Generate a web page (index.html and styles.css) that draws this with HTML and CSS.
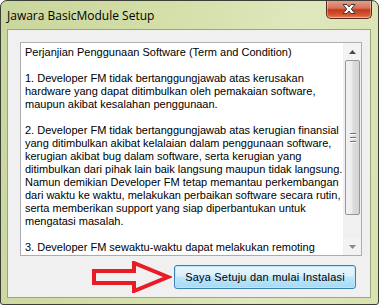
FILE: index.html
```html
<!DOCTYPE html>
<html>
<head>
<meta charset="utf-8">
<link rel="stylesheet" href="styles.css">
</head>
<body>
<div class="window">
  <div class="titlebar">
    <span class="title">Jawara BasicModule Setup</span>
    <div class="close">
      <svg width="20" height="12" viewBox="0 0 20 12">
        <path d="M4 1.5 L8 1.5 L10 4 L12 1.5 L16 1.5 L12.3 6 L16 10.5 L12 10.5 L10 8 L8 10.5 L4 10.5 L7.7 6 Z" fill="#ffffff" stroke="#3a3a3a" stroke-width="1" stroke-linejoin="round"/>
      </svg>
    </div>
  </div>
  <div class="client">
    <div class="textbox">
      <div class="text">
        <p>Perjanjian Penggunaan Software (Term and Condition)</p>
        <p>1. Developer FM tidak bertanggungjawab atas kerusakan<br>hardware yang dapat ditimbulkan oleh pemakaian software,<br>maupun akibat kesalahan penggunaan.</p>
        <p>2. Developer FM tidak bertanggungjawab atas kerugian finansial<br>yang ditimbulkan akibat kelalaian dalam penggunaan software,<br>kerugian akibat bug dalam software, serta kerugian yang<br>ditimbulkan dari pihak lain baik langsung maupun tidak langsung.<br>Namun demikian Developer FM tetap memantau perkembangan<br>dari waktu ke waktu, melakukan perbaikan software secara rutin,<br>serta memberikan support yang siap diperbantukan untuk<br>mengatasi masalah.</p>
        <p>3. Developer FM sewaktu-waktu dapat melakukan remoting</p>
      </div>
      <div class="scrollbar">
        <div class="sb-btn">
          <svg width="7" height="4" viewBox="0 0 7 4"><path d="M0 4 L3.5 0 L7 4 Z" fill="#4a4a4a"/></svg>
        </div>
        <div class="sb-thumb">
          <div class="grip"><i></i><i></i><i></i></div>
        </div>
        <div class="sb-track"></div>
        <div class="sb-btn">
          <svg width="7" height="4" viewBox="0 0 7 4"><path d="M0 0 L7 0 L3.5 4 Z" fill="#8a8a8a"/></svg>
        </div>
      </div>
    </div>
    <div class="footer">
      <svg class="arrow" width="80" height="32" viewBox="0 0 80 32">
        <path d="M2 10 L42 10 L42 2 L76 16 L42 30 L42 22 L2 22 Z" fill="none" stroke="#e81c24" stroke-width="4" stroke-linejoin="miter"/>
      </svg>
      <button class="btn">Saya Setuju dan mulai Instalasi</button>
    </div>
  </div>
</div>
</body>
</html>
```

FILE: styles.css
```css
html, body {
  margin: 0;
  padding: 0;
  background: #ffffff;
}
.window {
  box-sizing: border-box;
  width: 379px;
  height: 305px;
  display: flex;
  flex-direction: column;
  border: 1px solid #3c3f36;
  border-radius: 7px 7px 3px 3px;
  background: linear-gradient(100deg, #c9d69c 0%, #d4dfa9 40%, #dfe7bd 70%, #d8e2b0 100%);
  overflow: hidden;
}
.titlebar {
  height: 28px;
  display: flex;
  align-items: flex-start;
  flex-shrink: 0;
}
.title {
  font-family: "Open Sans", "Noto Sans", sans-serif;
  font-size: 12px;
  color: #000;
  margin: 7px 0 0 6px;
  line-height: 16px;
}
.close {
  margin-left: auto;
  margin-right: 6px;
  margin-top: -1px;
  width: 46px;
  height: 19px;
  box-sizing: border-box;
  border: 1px solid #5b2a20;
  border-top: none;
  border-radius: 0 0 5px 5px;
  background: linear-gradient(#e7a291 0%, #d8735a 45%, #c2381c 55%, #d55a33 85%, #e58a5e 100%);
  display: flex;
  align-items: center;
  justify-content: center;
  box-shadow: inset 0 0 0 1px rgba(255,255,255,0.35);
}
.client {
  flex: 1;
  margin: 0 7px 6px 6px;
  border: 1px solid #9aa67a;
  background: #f0f0f0;
  display: flex;
  flex-direction: column;
  padding: 12px 8px 0 12px;
}
.textbox {
  height: 212px;
  flex-shrink: 0;
  border: 1px solid #abadb3;
  border-top-color: #adb2b5;
  background: #ffffff;
  display: flex;
}
.text {
  flex: 1;
  padding: 3px 0 0 4px;
  font-family: "Liberation Sans", Arial, sans-serif;
  font-size: 11px;
  line-height: 13px;
  color: #000;
  overflow: hidden;
  white-space: nowrap;
}
.text p {
  margin: 0 0 13px 0;
}
.scrollbar {
  width: 17px;
  display: flex;
  flex-direction: column;
  background: #f0f0f0;
  border-left: 1px solid #f0f0f0;
}
.sb-btn {
  height: 17px;
  display: flex;
  align-items: center;
  justify-content: center;
  background: #f3f3f3;
  flex-shrink: 0;
}
.sb-thumb {
  height: 155px;
  flex-shrink: 0;
  box-sizing: border-box;
  border: 1px solid #979797;
  border-radius: 2px;
  margin: 0 1px;
  background: linear-gradient(90deg, #f1f1f1 0%, #ececec 45%, #dbdbdb 55%, #d4d4d4 100%);
  display: flex;
  align-items: center;
  justify-content: center;
}
.grip {
  display: flex;
  flex-direction: column;
  gap: 2px;
}
.grip i {
  display: block;
  width: 6px;
  height: 1px;
  background: #6e6e6e;
  border-bottom: 1px solid #fff;
}
.sb-track {
  flex: 1;
}
.footer {
  flex: 1;
  display: flex;
  align-items: center;
  justify-content: flex-end;
  padding-right: 6px;
}
.arrow {
  margin-right: 2px;
  margin-top: 1px;
}
.btn {
  width: 182px;
  height: 24px;
  border: 1px solid #3c7fb1;
  border-radius: 3px;
  background: linear-gradient(#eaf6fd 0%, #d9f0fc 45%, #bee6fd 50%, #a7d9f5 100%);
  box-shadow: inset 0 0 0 1px #c1e4f8;
  font-family: "Liberation Sans", Arial, sans-serif;
  font-size: 11px;
  letter-spacing: 0.2px;
  color: #000;
  padding: 0;
}
```
